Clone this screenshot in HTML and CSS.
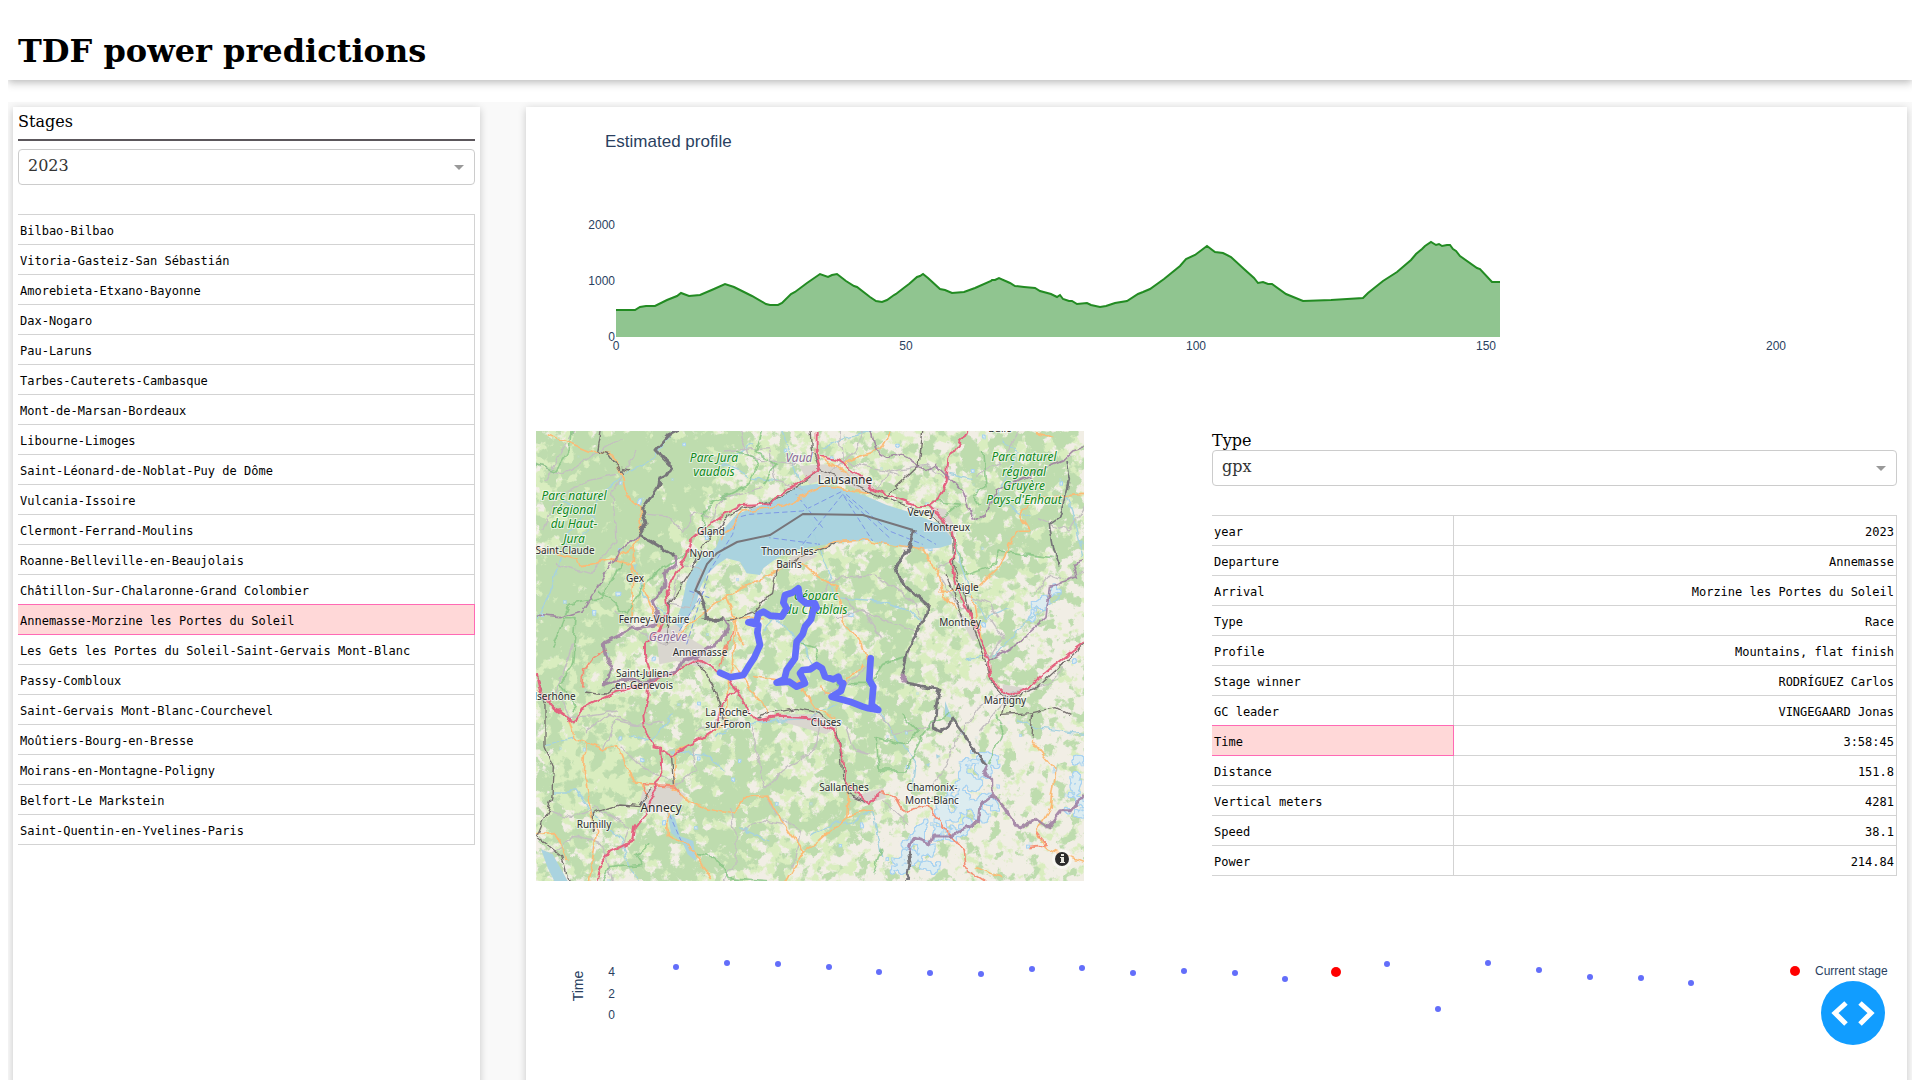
FILE: index.html
```html
<!DOCTYPE html>
<html lang="en">
<head>
<meta charset="utf-8">
<title>TDF power predictions</title>
<link rel="stylesheet" href="styles.css">
</head>
<body>
<header class="banner"><h1>TDF power predictions</h1></header>
<main class="layout">
  <section class="card stages">
    <label class="stages-label" for="year">Stages</label>
    <hr class="rule">
    <div class="dropdown"><select id="year"><option>2023</option></select></div>
    <table class="grid">
      <tbody>
        <tr><td>Bilbao-Bilbao</td></tr>
        <tr><td>Vitoria-Gasteiz-San Sébastián</td></tr>
        <tr><td>Amorebieta-Etxano-Bayonne</td></tr>
        <tr><td>Dax-Nogaro</td></tr>
        <tr><td>Pau-Laruns</td></tr>
        <tr><td>Tarbes-Cauterets-Cambasque</td></tr>
        <tr><td>Mont-de-Marsan-Bordeaux</td></tr>
        <tr><td>Libourne-Limoges</td></tr>
        <tr><td>Saint-Léonard-de-Noblat-Puy de Dôme</td></tr>
        <tr><td>Vulcania-Issoire</td></tr>
        <tr><td>Clermont-Ferrand-Moulins</td></tr>
        <tr><td>Roanne-Belleville-en-Beaujolais</td></tr>
        <tr><td>Châtillon-Sur-Chalaronne-Grand Colombier</td></tr>
        <tr><td class="selected">Annemasse-Morzine les Portes du Soleil</td></tr>
        <tr><td>Les Gets les Portes du Soleil-Saint-Gervais Mont-Blanc</td></tr>
        <tr><td>Passy-Combloux</td></tr>
        <tr><td>Saint-Gervais Mont-Blanc-Courchevel</td></tr>
        <tr><td>Moûtiers-Bourg-en-Bresse</td></tr>
        <tr><td>Moirans-en-Montagne-Poligny</td></tr>
        <tr><td>Belfort-Le Markstein</td></tr>
        <tr><td>Saint-Quentin-en-Yvelines-Paris</td></tr>
      </tbody>
    </table>
  </section>

  <section class="card stage">
    <svg class="chart" viewBox="0 0 1361 314" role="img" aria-label="Estimated profile">
      <text class="chart-title" x="69" y="30">Estimated profile</text>
      <path class="area" d="M80,220 L80,193 99,193 104,190 110,189 119,189 131,183 141,179 145,176 153,179 164,178 178,172 189,167 198,170 210,176 216,179 230,187 234,188 242,188 246,186 255,177 259,175 271,166 284,157 292,160 296,158 301,157 310,164 318,169 321,170 334,180 340,184 346,185 351,183 358,178 360,177 369,170 373,167 381,160 384,159 387,157 392,161 404,172 409,173 416,176 428,175 439,171 455,164 456,163 459,163 463,161 474,166 479,169 488,170 499,171 504,174 515,177 521,180 524,178 527,182 533,184 536,184 541,187 551,186 555,188 564,190 570,189 579,186 591,184 602,177 607,175 614,172 628,162 644,149 650,142 659,138 671,129 679,135 687,136 695,140 708,152 718,161 722,166 727,165 732,167 736,167 750,177 767,184 795,183 827,181 832,176 847,164 861,155 875,143 880,137 886,132 889,129 895,125 900,128 903,127 906,129 911,128 914,128 917,132 920,134 924,139 941,151 944,152 956,165 964,165 V220Z"/>
      <path class="line" d="M80,193 L99,193 104,190 110,189 119,189 131,183 141,179 145,176 153,179 164,178 178,172 189,167 198,170 210,176 216,179 230,187 234,188 242,188 246,186 255,177 259,175 271,166 284,157 292,160 296,158 301,157 310,164 318,169 321,170 334,180 340,184 346,185 351,183 358,178 360,177 369,170 373,167 381,160 384,159 387,157 392,161 404,172 409,173 416,176 428,175 439,171 455,164 456,163 459,163 463,161 474,166 479,169 488,170 499,171 504,174 515,177 521,180 524,178 527,182 533,184 536,184 541,187 551,186 555,188 564,190 570,189 579,186 591,184 602,177 607,175 614,172 628,162 644,149 650,142 659,138 671,129 679,135 687,136 695,140 708,152 718,161 722,166 727,165 732,167 736,167 750,177 767,184 795,183 827,181 832,176 847,164 861,155 875,143 880,137 886,132 889,129 895,125 900,128 903,127 906,129 911,128 914,128 917,132 920,134 924,139 941,151 944,152 956,165 964,165"/>
      <g class="tick end"><text x="79" y="112">2000</text><text x="79" y="168">1000</text><text x="79" y="224">0</text></g>
      <g class="tick mid"><text x="80" y="233">0</text><text x="370" y="233">50</text><text x="660" y="233">100</text><text x="950" y="233">150</text><text x="1240" y="233">200</text></g>
    </svg>

    <div class="details">
      <svg class="map" viewBox="0 0 548 450" role="img" aria-label="Map of the stage route">
        <defs>
          <filter id="forest" x="0" y="0" width="1" height="1" color-interpolation-filters="sRGB">
            <feGaussianBlur in="SourceGraphic" stdDeviation="6" result="d"/>
            <feTurbulence type="fractalNoise" baseFrequency="0.075" numOctaves="5" seed="4"/>
            <feColorMatrix values="0 0 0 0 0 0 0 0 0 0 0 0 0 0 0 1 0 0 0 0" result="n"/>
            <feComposite in="d" in2="n" operator="arithmetic" k2="0.5" k3="1"/>
            <feComponentTransfer result="t"><feFuncA type="linear" slope="12" intercept="-7"/></feComponentTransfer>
            <feFlood flood-color="#bedcae"/><feComposite in2="t" operator="in"/>
          </filter>
          <filter id="meadow" x="0" y="0" width="1" height="1" color-interpolation-filters="sRGB">
            <feGaussianBlur in="SourceGraphic" stdDeviation="10" result="d"/>
            <feTurbulence type="fractalNoise" baseFrequency="0.09" numOctaves="5" seed="21"/>
            <feColorMatrix values="0 0 0 0 0 0 0 0 0 0 0 0 0 0 0 1 0 0 0 0" result="n"/>
            <feComposite in="d" in2="n" operator="arithmetic" k2="0.5" k3="1"/>
            <feComponentTransfer result="t"><feFuncA type="linear" slope="8" intercept="-4.6"/></feComponentTransfer>
            <feFlood flood-color="#d9edbf"/><feComposite in2="t" operator="in"/>
          </filter>
          <filter id="ice" x="0" y="0" width="1" height="1" color-interpolation-filters="sRGB">
            <feGaussianBlur in="SourceGraphic" stdDeviation="4" result="d"/>
            <feTurbulence type="fractalNoise" baseFrequency="0.09" numOctaves="3" seed="8"/>
            <feColorMatrix values="0 0 0 0 0 0 0 0 0 0 0 0 0 0 0 1 0 0 0 0" result="n"/>
            <feComposite in="d" in2="n" operator="arithmetic" k2="0.5" k3="1"/>
            <feComponentTransfer result="t"><feFuncA type="linear" slope="24" intercept="-20"/></feComponentTransfer>
            <feMorphology in="t" operator="dilate" radius="1" result="o"/>
            <feFlood flood-color="#a9d3f2"/><feComposite in2="o" operator="in" result="edge"/>
            <feFlood flood-color="#dcecf0"/><feComposite in2="t" operator="in" result="fill"/>
            <feMerge><feMergeNode in="edge"/><feMergeNode in="fill"/></feMerge>
          </filter>
          <filter id="wander" x="0" y="0" width="1" height="1" color-interpolation-filters="sRGB">
            <feTurbulence type="fractalNoise" baseFrequency="0.09" numOctaves="2" seed="3" result="n"/>
            <feDisplacementMap in="SourceGraphic" in2="n" scale="8" xChannelSelector="R" yChannelSelector="G"/>
          </filter>
        </defs>
        <rect width="548" height="450" fill="#f1eee5"/>
        <g filter="url(#meadow)">
          <rect width="548" height="450" fill="#000" fill-opacity="0"/>
          <path fill-opacity=".3" d="M0,0H548V130L480,160 440,240 380,280 350,360 300,450H0Z"/>
          <path fill-opacity=".6" d="M0,0H200L150,100 90,180 60,260 0,280ZM20,270H110V380H10ZM390,130L430,210 420,240 440,235 400,140Z"/>
        </g>
        <g filter="url(#forest)">
          <rect width="548" height="450" fill="#000" fill-opacity="0"/>
          <path fill-opacity=".12" d="M0,0H548V180L470,220H380V290L330,350 270,450H0Z"/>
          <path fill-opacity=".34" d="M0,0H210L190,40 140,95 110,130 80,180 50,210 30,280H0ZM300,140L360,120 390,160 370,230 310,250 330,200ZM420,10L530,0 548,120 460,150 440,110ZM170,300L240,290 250,370 200,440 150,390ZM95,270h60v60h-60ZM10,380H50V450H20ZM40,300l30,-20v60ZM440,210L490,300 530,290 480,200ZM100,400H190V450H100ZM220,230L390,240 360,300 270,280ZM290,320L350,300 330,420 270,400ZM0,210H30V290H0ZM240,150L300,150 280,220 230,200ZM340,280L400,270 390,310 340,350ZM0,290H15V370H0Z"/>
          <path fill-opacity=".5" d="M60,0L205,0 185,40 140,90 100,125 110,90 60,150 20,230 0,180 30,90ZM110,130L150,95 130,150ZM50,230L90,150 100,190 60,240Z"/>
        </g>
        <g filter="url(#ice)">
          <rect width="548" height="450" fill="#000" fill-opacity="0"/>
          <path fill-opacity=".8" d="M435,315L470,325 455,350 462,380 440,400 400,410 405,440 350,445 365,410 390,385 420,345ZM535,325L548,318V390L530,380ZM500,165l25,-15 -10,25 -30,35Z"/>
        </g>

        <svg width="548" height="450" viewBox="0 0 1644 1350" class="vectors">
          <path fill="#aad3df" d="M407,642 412,590 437,522 452,452 467,420 492,385 540,350 562,295 602,250 662,227 732,202 782,167 852,157 892,167 982,192 1052,222 1122,244 1192,272 1232,282 1247,312 1247,340 1212,350 1162,354 1092,347 992,327 892,337 792,354 752,367 722,382 682,412 672,432 632,427 612,392 572,382 542,402 512,432 492,472 482,512 442,582Z"/>
          <path fill="#aad3df" d="M392,1140 417,1160 432,1215 472,1230 480,1290 455,1270 440,1235 405,1205ZM15,1255 50,1270 95,1350H55L35,1310ZM1227,810l20,50 -20,-5ZM1170,1000l12,-4 -4,12ZM1200,970l14,5 -12,8Z"/>
          <g class="town">
            <path d="M790,105l80,-5 90,30 60,40 -20,20 -120,-50 -60,20ZM1180,225l50,10 30,60 -10,30 -50,-60ZM360,600l60,-20 40,40 80,50 -40,40 -80,-20 -50,10ZM320,1080l70,-20 60,30 -20,30 -70,20 -50,-20ZM1400,760l60,10 -30,40 -30,-10ZM940,1100l100,-30 10,30 -60,20ZM730,850l120,0 50,40 -30,20 -140,-40ZM1260,540l30,20 40,60 -20,10ZM755,380l60,-20 30,15 -60,30Z"/>
          </g>
          <g class="ferry">
            <path d="M452,640 520,420 590,310 602,260 640,250 800,240 920,180M800,340 920,190 1010,330M852,340 700,320M920,190 1060,320M930,190 1060,300 1160,340M1130,300 1200,340M430,600 510,470M460,480 520,500M860,290 780,190M400,1150 440,1240"/>
          </g>
        </svg>
        <g filter="url(#wander)">
        <rect width="548" height="450" fill="#fff" fill-opacity="0"/>
        <svg width="548" height="450" viewBox="0 0 1644 1350" class="vectors">
          <g class="river">
            <path d="M0,560 45,480 100,300 200,190 262,130 340,90 410,0M120,350 180,260 80,210M300,400 320,490 400,560M730,150 640,140 560,100 650,40M860,50 930,20 1010,0M1240,130 1310,145M1250,320 1300,480 1350,560 1420,530M682,600 720,560 800,640 830,700M740,0 900,500 1030,510 1120,540 1160,580M540,920 600,880 690,870 820,862 900,820M1027,837 1080,920 1140,1000 1130,1080M400,960 500,970 570,1020M610,1190 700,1230M50,1080 120,1080 180,1160 260,1230 280,1310 310,1350M30,940 120,920M280,910 350,930 410,850M820,1220 900,1170 940,1180 1010,1140 1037,1280M1440,870 1500,890 1644,910M1580,490 1440,600 1380,670 1290,690M1400,30 1450,60 1420,120 1380,200 1480,260M1590,190 1620,280 1644,380"/>
          </g>
          <g class="minor">
            <path d="M0,100 80,130 190,60 260,20M20,300 60,200 150,150 240,130M330,250 400,255 440,300 480,240 520,260M300,60 230,180 240,330 160,430 60,400M40,1270 120,1210 200,1240 230,1350M30,150 110,0M560,60 700,50 720,150 800,180M610,0 640,80 780,100M680,170 560,200 520,280M880,130 960,60 980,0M910,0 920,90 1000,110 1090,130M960,160 1010,190 1060,120 1170,100 1240,150M820,520 900,440 1020,430 1140,520 1160,590M930,500 960,540 1060,570 1140,600M1200,410 1250,390M1210,440 1260,520 1300,540M240,540 290,590 380,640 460,620M110,640 60,780 100,860 240,840M150,900 220,850 300,880 380,870M200,960 240,870 330,890M260,950 320,1010 420,1060 480,1010 470,950M480,900 560,860 640,880 690,1070 740,1020 840,950 850,890 830,830M580,1130 600,1220 600,1300 560,1350M692,1092 720,1150 790,1200 770,1310M620,1200 680,1170 740,1180M40,1140 110,1160 180,1130M260,1250 280,1190 180,1130M900,560 980,540 1040,620M870,790 960,740 1000,690M930,890 950,950 1000,970 960,960M1030,850 1080,910 1190,880M1180,1070 1230,1010 1260,930 1330,830 1400,780M1330,900 1430,780 1540,760 1580,710M1360,680 1400,620 1360,560M1290,490 1360,520 1390,560M1644,420 1590,450 1540,430 1500,480M1320,130 1390,100 1450,0M1500,260 1600,300 1644,230M1040,1110 1120,1180M440,400 500,425 460,530 400,520 430,430"/>
          </g>
          <g class="park">
            <path d="M0,100 60,120 100,60 105,0M600,60 670,90 640,160 560,200 500,240 500,300M680,0 660,60 720,100 680,160M50,650 100,520 200,500 260,390M190,480 270,550 330,450 460,360M90,560 120,560 110,700 70,760 120,830 110,840M1190,210 1270,220 1220,260 1260,340 1290,430 1380,400 1390,360 1550,380M1340,60 1350,170 1310,190 1330,220M1100,850 1150,900 1100,940 1020,920 1030,1020 1110,1020 1180,880 1240,850M900,760 1000,760 1040,700 1110,680M792,640 840,650 850,690M1380,850 1400,900 1360,1000M340,1240 300,1270 320,1300 220,1310 200,1350M480,1270 540,1280 580,1340 700,1350M1040,1250 1010,1330"/>
          </g>
          <g class="road">
            <path d="M32,5 172,62 232,72 257,132 272,197 312,232 317,282 292,352 222,387 132,407 122,382 2,352M292,402 292,352M230,385 292,402 342,512 372,592M292,402 285,560M427,617 482,557 502,542 592,482 722,422 782,380 892,332 992,327 1080,345 1162,357 1202,422 1222,492 1262,537M792,392 842,437 902,462 922,572 982,642 997,687M982,700 922,757M1210,480 1332,462 1392,402 1442,302 1482,300 1452,252 1492,202 1644,190M1310,490 1320,560 1340,620M102,867 117,922 202,957 247,947 282,1037 332,1077M147,942 142,1027 167,1157 182,1207 160,1350M412,1067 432,1092 512,1137 592,1152 632,1097 692,1092 742,1177 802,1262 852,1227 932,1157 1012,1137M802,1262 752,1350M392,1137 397,1207 462,1247 527,1347M1487,927 1557,1017 1542,1127 1502,1202 1522,1247 1644,1297M922,102 952,82 1032,57 1062,0M552,330 620,240 740,225 860,165 1000,185M582,742 600,560 570,490M620,640 590,560 680,560M790,757 840,830 897,860M650,740 790,757M852,77 942,132M412,1080 420,960 470,940 580,870M0,1207 60,1205 90,1290M1500,0 1550,20M1320,1310 1400,1340M900,800 850,770M940,1060 932,1157M590,700 700,850M567,870 582,742"/>
          </g>
          <g class="trunk">
            <path d="M1037,1082 1077,1097 1102,1142 1172,1122 1282,1257 1287,1312 1347,1350M1502,1202 1530,1240 1480,1247M137,770 140,720 170,680 210,655M340,1100 320,1060 420,1065 430,1090M552,700 590,600"/>
          </g>
          <g class="rail">
            <path d="M192,0 182,62 222,72 262,130 257,112 279,117M2,727 27,817 27,947 52,1007 47,1107 2,1217 77,1277 97,1350M482,687 532,767 562,867M667,862 690,850 782,832 852,847 900,890 912,940 917,1040 940,1090 997,1115M852,112 962,162 1032,197 1122,227 1212,272 1247,302 1250,400 1290,500 1310,580 1350,690 1365,750 1410,800M1410,800 1400,850 1490,845 1560,830 1600,850M1490,845 1485,920M172,1207 172,1147 252,1122 312,1127 350,1070M412,1060 407,975M825,0 830,60 852,112 782,167 722,205 620,232 560,270 500,350 460,430 400,520 390,640M492,560 580,570 660,540 710,480 720,420 782,380 900,335M150,780 210,790 250,760M1045,200 1150,100 1160,0M1230,430 1280,560M1644,638 1500,770 1420,800"/>
          </g>
          <g class="motorway">
            <path d="M842,0 842,72 852,112 822,132 782,157 722,197 702,217 622,222 562,252 502,297 462,332 452,372 422,422 392,482 397,542 367,602 327,637 327,677 342,717 337,797 322,857 327,897 352,942 372,947 377,1037 357,1057 362,1077 327,1147 297,1187 292,1227 222,1262 192,1307 182,1350M852,77 902,87 972,132 1012,177 1072,197 1142,222 1182,222 1202,207 1232,152 1237,82 1292,0M1182,222 1222,262 1247,302 1257,352 1242,392 1272,492 1302,552 1332,612 1359,687 1362,742 1417,792 1482,767 1522,727 1612,657 1644,634M377,962 407,975 482,932 542,892 557,817 597,777M482,682 547,722 582,742 622,817 667,867 732,857 822,862 897,902 922,977 927,1057 997,1117 1037,1082M2,727 15,780 52,827 117,877 137,832 242,782 382,742 482,687"/>
          </g>
          <g class="border lilac">
            <path d="M412,372 417,402 382,432 387,462 352,512 367,552 362,582 292,592 252,612 202,637 207,672 227,707 202,762 242,747 312,752 382,737 422,717 442,687 482,677 552,627 577,587 557,552M1097,727 1112,757M1352,1002 1342,1022 1370,1047 1372,1092 1402,1127 1447,1192 1502,1162 1537,1187 1572,1142 1607,1142 1644,1092M1372,1092 1332,1122 1327,1172 1252,1212 1192,1212 1182,1237 1132,1222 1117,1257"/>
            <path class="thin" d="M0,552 70,560 140,540 200,440 250,360 307,312M1005,0 1020,60 1050,80 1100,70 1170,120 1200,100 1280,180 1310,270 1350,250 1380,180 1460,140 1530,110 1580,90 1610,60 1644,50M1359,687 1440,640 1530,560 1540,470 1620,440 1610,400 1644,390"/>
          </g>
          <g class="border grey">
            <path d="M427,0 392,17 357,57 407,107 392,132 372,142 367,167 317,237 330,277 307,312 347,332 412,372M557,552 537,577 507,552 507,522 492,487 477,477M1132,297 1117,357 1077,402 1087,440 1107,462 1177,522 1167,562 1122,642 1117,657 1097,727M1112,757 1212,775 1202,817 1192,892 1212,902 1252,867 1282,907 1317,962 1352,1002M1117,1257 1122,1297 1114,1350"/>
            <path class="thin" d="M1590,90 1600,150 1570,260 1540,280 1555,360 1570,400"/>
          </g>
        </svg>
        </g>
        <path class="lake-border" d="M159,160 171,133 181,122 201,111 234,104 267,83 327,84 377,99"/>

        <g class="parks">
          <text x="178" y="31">Parc Jura</text><text x="178" y="45">vaudois</text>
          <text x="38" y="69">Parc naturel</text><text x="38" y="83">régional</text><text x="38" y="97">du Haut-</text><text x="38" y="112">Jura</text>
          <text x="488" y="30">Parc naturel</text><text x="488" y="45">régional</text><text x="488" y="59">Gruyère</text><text x="488" y="73">Pays-d'Enhaut</text>
          <text x="280" y="169">Géoparc</text><text x="280" y="183">du Chablais</text>
        </g>
        <g class="regions"><text x="263" y="31">Vaud</text><text x="132" y="210">Genève</text></g>
        <g class="places">
          <text x="29" y="123">Saint-Claude</text><text x="175" y="104">Gland</text><text x="166" y="126">Nyon</text>
          <text x="253" y="124">Thonon-les-</text><text x="253" y="137">Bains</text><text x="99" y="151">Gex</text>
          <text x="118" y="192">Ferney-Voltaire</text><text x="164" y="225">Annemasse</text><text x="385" y="85">Vevey</text>
          <text x="411" y="100">Montreux</text><text x="431" y="160">Aigle</text><text x="424" y="195">Monthey</text>
          <text x="464" y="1">Bulle</text><text x="108" y="246">Saint-Julien-</text><text x="108" y="258">en-Genevois</text>
          <text x="19" y="269">lserhône</text><text x="192" y="285">La Roche-</text><text x="192" y="297">sur-Foron</text>
          <text x="58" y="397">Rumilly</text><text x="290" y="295">Cluses</text><text x="308" y="360">Sallanches</text>
          <text x="396" y="360">Chamonix-</text><text x="396" y="373">Mont-Blanc</text><text x="469" y="273">Martigny</text>
        </g>
        <g class="places cities"><text x="309" y="53">Lausanne</text><text x="125" y="381">Annecy</text></g>
        <svg width="548" height="450" viewBox="0 0 1644 1350">
          <path class="route" d="M552,725 582,739 622,732 637,707 655,680 672,642 664,605 667,582 637,574 662,570 667,550 682,542 702,554 737,557 747,540 752,532 742,515 747,492 770,485 787,472 792,502 810,517 837,517 842,530 832,537 825,565 807,587 800,610 782,632 777,682 752,717 745,745 722,755 760,752 782,767 807,757 802,745 792,727 800,717 822,715 842,702 858,712 867,737 892,745 907,737 912,752 922,757 915,780 887,797 942,812 980,827 997,832 1027,837 1007,822 1012,767 1000,747 1004,682"/>
        </svg>
        <circle cx="526" cy="428" r="10" fill="#fff" fill-opacity=".5"/>
        <circle cx="526" cy="428" r="7" fill="#2b2b2b"/>
        <path fill="#e8e8e0" d="M524,426h4v5h1v1h-5v-1h1v-4h-1zM525,423h3v2h-3z"/>
      </svg>

      <div class="facts">
        <label class="type-label" for="type">Type</label>
        <div class="dropdown"><select id="type"><option>gpx</option></select></div>
        <table class="grid pairs">
          <tbody>
            <tr><th scope="row">year</th><td>2023</td></tr>
            <tr><th scope="row">Departure</th><td>Annemasse</td></tr>
            <tr><th scope="row">Arrival</th><td>Morzine les Portes du Soleil</td></tr>
            <tr><th scope="row">Type</th><td>Race</td></tr>
            <tr><th scope="row">Profile</th><td>Mountains, flat finish</td></tr>
            <tr><th scope="row">Stage winner</th><td>RODRÍGUEZ Carlos</td></tr>
            <tr><th scope="row">GC leader</th><td>VINGEGAARD Jonas</td></tr>
            <tr><th scope="row" class="selected">Time</th><td>3:58:45</td></tr>
            <tr><th scope="row">Distance</th><td>151.8</td></tr>
            <tr><th scope="row">Vertical meters</th><td>4281</td></tr>
            <tr><th scope="row">Speed</th><td>38.1</td></tr>
            <tr><th scope="row">Power</th><td>214.84</td></tr>
          </tbody>
        </table>
      </div>
    </div>

    <svg class="chart" viewBox="0 0 1361 260" role="img" aria-label="Time per stage">
      <text class="axis-title" transform="translate(47 105) rotate(-90)">Time</text>
      <g class="tick end"><text x="79" y="95">4</text><text x="79" y="117">2</text><text x="79" y="138">0</text></g>
      <g class="dots">
        <circle cx="140" cy="86" r="3"/><circle cx="191" cy="82" r="3"/><circle cx="242" cy="83" r="3"/><circle cx="293" cy="86" r="3"/><circle cx="343" cy="91" r="3"/><circle cx="394" cy="92" r="3"/><circle cx="445" cy="93" r="3"/><circle cx="496" cy="88" r="3"/><circle cx="546" cy="87" r="3"/><circle cx="597" cy="92" r="3"/><circle cx="648" cy="90" r="3"/><circle cx="699" cy="92" r="3"/><circle cx="749" cy="98" r="3"/><circle cx="851" cy="83" r="3"/><circle cx="902" cy="128" r="3"/><circle cx="952" cy="82" r="3"/><circle cx="1003" cy="89" r="3"/><circle cx="1054" cy="96" r="3"/><circle cx="1105" cy="97" r="3"/><circle cx="1155" cy="102" r="3"/>
      </g>
      <circle cx="800" cy="91" r="5" fill="red"/>
      <circle cx="1259" cy="90" r="5" fill="red"/>
      <text class="tick" x="1279" y="94">Current stage</text>
    </svg>
  </section>
</main>
<button class="debug" type="button" aria-label="Open developer tools">
  <svg width="64" height="64" viewBox="0 0 64 64"><path d="M25,22 14,32 25,43M39,22 50,32 39,43"/></svg>
</button>
</body>
</html>
```
FILE: styles.css
```css
* { box-sizing: border-box; }

body {
  margin: 21px 8px 0;
  background: #fff;
  color: #000;
  font-family: "DejaVu Serif", serif;
  font-size: 16px;
}

.banner {
  padding: 12px 10px 10px;
  background: #fff;
  box-shadow: 0 4px 8px rgba(0, 0, 0, .18), 0 0 6px rgba(0, 0, 0, .12);
}

.banner h1 {
  margin: 0;
  font-size: 32px;
  line-height: 37px;
}

.layout {
  display: grid;
  grid-template-columns: 467fr 1381fr;
  gap: 46px;
  margin-top: 22px;
  padding: 5px;
  background: #f9f9f9;
}

.card {
  min-width: 0;
  background: #fff;
  box-shadow: 0 2px 8px rgba(0, 0, 0, .2);
}

.stages { padding: 5px; }
.stage { padding: 10px; }

.stages-label,
.type-label {
  display: block;
  line-height: 19px;
}

.rule {
  height: 2px;
  margin: 8px 0;
  border: 0;
  background: #5c575c;
}

.dropdown {
  position: relative;
  margin-bottom: 29px;
}

.dropdown select {
  display: block;
  width: 100%;
  height: 36px;
  padding: 0 30px 4px 9px;
  border: 1px solid #ccc;
  border-radius: 4px;
  appearance: none;
  background: #fff;
  color: #333;
  font: inherit;
}

.dropdown::after {
  content: "";
  position: absolute;
  top: 16px;
  right: 11px;
  border: 5px solid transparent;
  border-top-color: #999;
  border-bottom-width: 0;
}

.grid {
  width: 100%;
  border-top: 1px solid #d3d3d3;
  border-spacing: 0;
  table-layout: fixed;
  font-family: "DejaVu Sans Mono", monospace;
  font-size: 12px;
}

.grid td,
.grid th {
  height: 30px;
  padding: 3px 2px 0;
  border-right: 1px solid #d3d3d3;
  border-bottom: 1px solid #d3d3d3;
  font-weight: normal;
  text-align: left;
  white-space: nowrap;
}

.pairs th { width: 242px; }
.pairs td { text-align: right; }

.grid .selected {
  border-color: hotpink;
  background: #ffd8d8;
  box-shadow: 0 -1px hotpink;
}

.details {
  display: grid;
  grid-template-columns: 548fr 685fr;
  gap: 128px;
  align-items: start;
}

.chart,
.map {
  display: block;
  width: 100%;
  height: auto;
}

.chart text {
  fill: #2a3f5f;
  font-family: "Liberation Sans", Arial, sans-serif;
}

.chart-title { font-size: 17px; }
.axis-title { font-size: 14px; text-anchor: middle; }
.tick { font-size: 12px; }
.end { text-anchor: end; }
.mid { text-anchor: middle; }
.area { fill: #90c590; }
.line { fill: none; stroke: #228b22; stroke-width: 2; }
.dots { fill: #636efa; }

.vectors path { stroke-linejoin: round; }
.vectors g { fill: none; }
.vectors .town { fill: #d9d6cf; }
.river { stroke: #a6d2df; stroke-width: 4; }
.minor { stroke: #c3bfc0; stroke-width: 4; }
.park { stroke: #84c482; stroke-width: 5; opacity: .8; }
.ferry { stroke: #7d98e6; stroke-width: 3; stroke-dasharray: 16 9; }
.road { stroke: #fbbb76; stroke-width: 5; }
.trunk { stroke: #f58f74; stroke-width: 5; }
.rail { stroke: #77716f; stroke-width: 4; }
.motorway { stroke: #e4627f; stroke-width: 6; }
.border { stroke-width: 9; }
.border .thin { stroke-width: 5; }
.lilac { stroke: #9d7ba0; opacity: .85; }
.grey { stroke: #77757a; }
.lake-border { fill: none; stroke: #77757a; stroke-width: 2; }

.map text {
  font-family: "Noto Sans", sans-serif;
  text-anchor: middle;
  paint-order: stroke;
  stroke: rgba(255, 255, 255, .65);
  stroke-width: 2px;
}

.parks,
.regions {
  font-size: 12px;
  font-style: italic;
}

.parks { fill: #108a1c; }
.regions { fill: #8b6a98; }
.places { fill: #2c2c2c; font-size: 10px; }
.cities { font-size: 12px; }

.route {
  fill: none;
  stroke: #636efa;
  stroke-width: 20;
  stroke-linecap: round;
  stroke-linejoin: round;
}

.debug {
  position: fixed;
  right: 35px;
  bottom: 35px;
  width: 64px;
  height: 64px;
  padding: 0;
  border: 0;
  border-radius: 50%;
  background: #119dff;
}

.debug svg { display: block; }
.debug path { fill: none; stroke: #fff; stroke-width: 5; }
```
